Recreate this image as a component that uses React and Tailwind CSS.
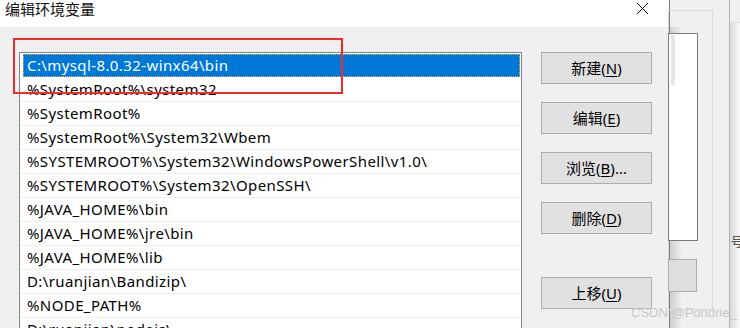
import React from "react";

const rows = [
  "C:\\mysql-8.0.32-winx64\\bin",
  "%SystemRoot%\\system32",
  "%SystemRoot%",
  "%SystemRoot%\\System32\\Wbem",
  "%SYSTEMROOT%\\System32\\WindowsPowerShell\\v1.0\\",
  "%SYSTEMROOT%\\System32\\OpenSSH\\",
  "%JAVA_HOME%\\bin",
  "%JAVA_HOME%\\jre\\bin",
  "%JAVA_HOME%\\lib",
  "D:\\ruanjian\\Bandizip\\",
  "%NODE_PATH%",
  "D:\\ruanjian\\nodejs\\",
];

function Btn({ label, k, suffix = "", extra = "" }) {
  return (
    <div
      className={`w-[111px] h-[32px] shrink-0 bg-[#e1e1e1] border border-[#adadad] flex items-center justify-center text-[15px] text-black leading-none ${extra}`}
    >
      <span>
        {label}(<span className="underline underline-offset-2">{k}</span>){suffix}
      </span>
    </div>
  );
}

export default function App() {
  const font = { fontFamily: '"Noto Sans", "Noto Sans CJK SC", sans-serif' };
  return (
    <div
      className="relative w-[740px] h-[328px] overflow-hidden bg-[#f0f0f0] flex"
      style={font}
    >
      {/* Dialog */}
      <div className="w-[670px] h-full flex flex-col border-r border-[#7a7a7a] shrink-0 overflow-hidden">
        <div className="h-[27px] shrink-0 bg-white flex items-start justify-between">
          <div className="pl-[5px] pt-[1px] text-[15px] leading-[17px] text-[#111]">编辑环境变量</div>
          <svg width="13" height="13" viewBox="0 0 13 13" className="mt-[2px] mr-[20px]">
            <path d="M1 1 L12 12 M12 1 L1 12" stroke="#111" strokeWidth="1" />
          </svg>
        </div>
        <div className="flex-1 bg-[#f0f0f0] flex pt-[25px] pl-[19px]">
          <div className="w-[503px] h-[400px] shrink-0 bg-white border border-[#828790] pt-[1px] tracking-[0.4px]">
            {rows.map((r, i) =>
              i === 0 ? (
                <div key={i} className="h-[24px] flex">
                  <div className="ml-[3px] mr-[1px] flex-1 h-[23px] bg-[#0078d7] outline-1 outline-dotted outline-[#f0b050] -outline-offset-1 flex items-center pl-[4px] text-white text-[15px] leading-none">
                    {r}
                  </div>
                </div>
              ) : (
                <div
                  key={i}
                  className="h-[24px] border-b border-[#f0f0f0] flex items-center pl-[7px] text-[15px] leading-none text-black whitespace-nowrap"
                >
                  {r}
                </div>
              )
            )}
          </div>
          <div className="ml-[19px] flex flex-col gap-[18px]">
            <Btn label="新建" k="N" />
            <Btn label="编辑" k="E" />
            <Btn label="浏览" k="B" suffix="..." />
            <Btn label="删除" k="D" />
            <Btn label="上移" k="U" extra="mt-[25px]" />
          </div>
        </div>
      </div>

      {/* Window behind */}
      <div className="relative flex-1 h-full bg-[#f0f0f0]">
        <div className="absolute left-0 top-[27px] w-[12px] h-full bg-gradient-to-r from-[#cfcfcf] to-transparent" />
        <div className="absolute left-[-2px] top-[10px] w-[45px] h-[300px] border border-[#dcdcdc]" />
        <div className="absolute left-[-2px] top-[33px] w-[30px] h-[208px] bg-white border border-[#7a7a7a]">
          <div className="ml-[2px] mt-[1px] w-[4px] h-[50px] bg-[#e6e6e6]" />
        </div>
        <div className="absolute left-[-2px] top-[259px] w-[29px] h-[33px] bg-[#dedede] border border-[#adadad]" />
        <div className="absolute left-[59px] top-0 w-[11px] h-full border-l border-[#b0b0b0] flex flex-col overflow-hidden">
          <div className="h-[23px] bg-[#f0f0f0] border-b border-[#e0e0e0]" />
          <div className="relative flex-1 bg-gradient-to-r from-[#d8d8d8] to-[#fafafa]">
            <div className="absolute left-[1px] top-[214px] text-[12px] leading-none text-[#333]">号</div>
          </div>
        </div>
      </div>

      {/* Red annotation rectangle */}
      <div className="absolute left-[13px] top-[38px] w-[330px] h-[56px] border-2 border-[#f52a2a]" />

      {/* Watermark */}
      <div
        className="absolute left-[631px] top-[306px] text-[13px] leading-none text-[#c8c8c8] whitespace-nowrap"
        style={{ fontFamily: '"Liberation Sans", sans-serif' }}
      >
        CSDN @Pondrie_
      </div>
    </div>
  );
}
